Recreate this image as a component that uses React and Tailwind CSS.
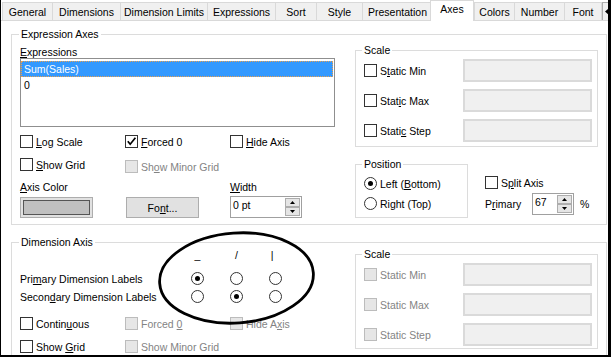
import React from 'react';

function Box({ checked, disabled }) {
  return (
    <span
      className={
        disabled
          ? 'flex h-[13px] w-[13px] shrink-0 border border-[#bcbcbc] bg-[#e6e6e6]'
          : 'flex h-[13px] w-[13px] shrink-0 items-center justify-center border border-[#333333] bg-white'
      }
    >
      {checked && (
        <svg width="11" height="11" viewBox="0 0 11 11">
          <path d="M1.8 5.2 L4.2 8.2 L9.4 1.8" fill="none" stroke="#000" strokeWidth="1.7" />
        </svg>
      )}
    </span>
  );
}

function Radio({ on }) {
  return (
    <span className="flex h-[13px] w-[13px] shrink-0 items-center justify-center rounded-full border border-[#333333] bg-white">
      {on && <span className="h-[5px] w-[5px] rounded-full bg-black" />}
    </span>
  );
}

function Option({ children, checked, disabled, className = '' }) {
  return (
    <div className={`flex items-center gap-[3px] ${className}`}>
      <Box checked={checked} disabled={disabled} />
      <span className={disabled ? 'text-[#838383]' : ''}>{children}</span>
    </div>
  );
}

function Field() {
  return <div className="ml-auto h-[23px] w-[129px] border-2 border-[#dadada] bg-[#f0f0f0]" />;
}

function SpinBtn({ up }) {
  return (
    <div className="flex flex-1 items-center justify-center border border-[#adadad] bg-[#e5e5e5]">
      <svg width="5" height="3" viewBox="0 0 5 3">
        <path d={up ? 'M0 3 L2.5 0 L5 3 Z' : 'M0 0 L5 0 L2.5 3 Z'} fill="#000" />
      </svg>
    </div>
  );
}

function Spin({ value, className = '' }) {
  return (
    <div className={`flex h-[22px] border border-[#a0a0a0] bg-white ${className}`}>
      <span className="flex-1 pl-[2px] pt-[2px]">{value}</span>
      <div className="my-[1px] mr-[1px] flex w-[15px] flex-col">
        <SpinBtn up />
        <SpinBtn />
      </div>
    </div>
  );
}

function ScaleRows({ disabled }) {
  return (
    <div className="flex flex-col gap-[7px] pl-[2px] pt-[3px]">
      <div className="flex h-[23px] items-center">
        <Option disabled={disabled}>{disabled ? 'Static Min' : <>S<u>t</u>atic Min</>}</Option>
        <Field />
      </div>
      <div className="flex h-[23px] items-center">
        <Option disabled={disabled}>{disabled ? 'Static Max' : <>Stat<u>i</u>c Max</>}</Option>
        <Field />
      </div>
      <div className="flex h-[23px] items-center">
        <Option disabled={disabled}>{disabled ? 'Static Step' : <>Stati<u>c</u> Step</>}</Option>
        <Field />
      </div>
    </div>
  );
}

const tabs = [
  { label: 'General', cls: 'w-[50px]' },
  { label: 'Dimensions', cls: 'w-[68px]' },
  { label: 'Dimension Limits', cls: 'w-[87px]' },
  { label: 'Expressions', cls: 'w-[68px]' },
  { label: 'Sort', cls: 'w-[41px]' },
  { label: 'Style', cls: 'w-[46px]' },
  { label: 'Presentation', cls: 'w-[70px]' },
  { label: 'Axes', active: true },
  { label: 'Colors', cls: 'w-[40px]' },
  { label: 'Number', cls: 'w-[50px]' },
  { label: 'Font', cls: 'w-[38px] border-r' },
];

export default function App() {
  return (
    <div className="relative h-[359px] w-[612px] overflow-hidden bg-white font-['Liberation_Sans',Arial,sans-serif] text-[10.5px] leading-[12px] text-black">
      <div className="h-[357px] w-[611px] overflow-hidden border-b-2 border-l border-r-[3px] border-black">
        {/* tab strip */}
        <div className="flex h-[20px] items-end pl-[1px]">
          {tabs.map((t) =>
            t.active ? (
              <div
                key={t.label}
                className="relative z-10 -mb-px -ml-[2px] h-[21px] w-[44px] border-x border-t border-[#d9d9d9] bg-white pt-[2px] text-center"
              >
                {t.label}
              </div>
            ) : (
              <div
                key={t.label}
                className={`h-[18px] border-l border-t border-[#d9d9d9] bg-[#f0f0f0] pt-[3px] text-center ${t.cls}`}
              >
                {t.label}
              </div>
            )
          )}
          <div className="relative h-[18px] w-[6px] border-l border-t border-[#adadad] bg-[#f0f0f0]">
            <svg className="absolute left-[2px] top-[5px]" width="4" height="7" viewBox="0 0 4 7">
              <path d="M0 3.5 L4 0 L4 7 Z" fill="#000" />
            </svg>
          </div>
        </div>

        {/* tab panel */}
        <div className="h-full border-t border-[#d9d9d9]">
          {/* Expression Axes */}
          <fieldset className="ml-[10px] mr-[1px] mt-[7px] border border-[#dcdcdc] pb-[6px] pl-[7px]">
            <legend className="px-[2px]">Expression Axes</legend>
            <div className="flex pl-[1px]">
              <div className="w-[335px]">
                <div className="mt-[6px]">
                  <u>E</u>xpressions
                </div>
                <div className="h-[69px] w-[315px] border border-[#8f8f8f] bg-white pt-[2px]">
                  <div className="mr-px flex h-[16px] items-center border border-dotted border-[#e8a050] bg-[#3399ff] pl-[2px] text-white">
                    Sum(Sales)
                  </div>
                  <div className="flex h-[16px] items-center pl-[3px]">0</div>
                </div>
                <div className="mt-[8px] flex">
                  <Option className="w-[105px]">
                    <u>L</u>og Scale
                  </Option>
                  <Option className="w-[105px]" checked>
                    <u>F</u>orced 0
                  </Option>
                  <Option className="w-[105px]">
                    <u>H</u>ide Axis
                  </Option>
                </div>
                <div className="mt-[10px] flex items-start">
                  <Option className="w-[105px]">
                    <u>S</u>how Grid
                  </Option>
                  <Option className="mt-[2px] w-[105px]" disabled>
                    Sh<u>o</u>w Minor Grid
                  </Option>
                </div>
                <div className="mt-[8px] flex">
                  <div className="w-[210px]">
                    <u>A</u>xis Color
                  </div>
                  <div>
                    <u>W</u>idth
                  </div>
                </div>
                <div className="mt-[3px] flex items-start">
                  <div className="mt-px flex h-[21px] w-[73px] border border-[#adadad] bg-[#e1e1e1] p-[2px]">
                    <div className="flex-1 border border-[#555555] bg-[#c0c0c0]" />
                  </div>
                  <div className="ml-[33px] mt-px flex h-[21px] w-[73px] items-center justify-center border border-[#adadad] bg-[#e1e1e1]">
                    <span>
                      Fo<u>n</u>t...
                    </span>
                  </div>
                  <Spin value="0 pt" className="ml-[31px] w-[72px]" />
                </div>
              </div>

              <div className="w-[243px]">
                <fieldset className="mt-[4px] border border-[#dcdcdc] pb-[4px] pl-[6px] pr-[5px]">
                  <legend className="px-[2px]">Scale</legend>
                  <ScaleRows />
                </fieldset>
                <div className="mt-[11px] flex items-start">
                  <fieldset className="w-[113px] border border-[#dcdcdc] pb-[7px] pl-[6px]">
                    <legend className="px-[2px]">Position</legend>
                    <div className="flex flex-col gap-[7px] pl-[2px] pt-[7px]">
                      <div className="flex items-center gap-[3px]">
                        <Radio on />
                        <span>
                          Left (<u>B</u>ottom)
                        </span>
                      </div>
                      <div className="flex items-center gap-[3px]">
                        <Radio />
                        <span>Right (Top)</span>
                      </div>
                    </div>
                  </fieldset>
                  <div className="ml-[17px] mt-[18px]">
                    <Option>
                      S<u>p</u>lit Axis
                    </Option>
                    <div className="mt-[4px] flex items-center">
                      <span className="w-[47px]">
                        P<u>r</u>imary
                      </span>
                      <Spin value="67" className="w-[42px]" />
                      <span className="ml-[6px]">%</span>
                    </div>
                  </div>
                </div>
              </div>
            </div>
          </fieldset>

          {/* Dimension Axis */}
          <fieldset className="ml-[10px] mr-[1px] mt-[11px] border border-[#dcdcdc] pb-[6px] pl-[7px]">
            <legend className="px-[2px]">Dimension Axis</legend>
            <div className="flex pl-[1px]">
              <div className="w-[335px]">
                <div className="mt-px grid grid-cols-[158px_39px_39px_39px] text-center">
                  <span />
                  <span>_</span>
                  <span>/</span>
                  <span className="pr-[7px]">|</span>
                </div>
                <div className="mt-[11px] grid h-[13px] grid-cols-[158px_39px_39px_39px] items-center justify-items-center">
                  <span className="justify-self-start">
                    Pri<u>m</u>ary Dimension Labels
                  </span>
                  <Radio on />
                  <Radio />
                  <Radio />
                </div>
                <div className="mt-[5px] grid h-[13px] grid-cols-[158px_39px_39px_39px] items-center justify-items-center">
                  <span className="justify-self-start">
                    Secon<u>d</u>ary Dimension Labels
                  </span>
                  <Radio />
                  <Radio on />
                  <Radio />
                </div>
                <div className="mt-[14px] flex">
                  <Option className="w-[105px]">
                    Contin<u>u</u>ous
                  </Option>
                  <Option className="w-[105px]" disabled>
                    Forced <u>0</u>
                  </Option>
                  <Option className="w-[105px]" disabled>
                    Hide A<u>x</u>is
                  </Option>
                </div>
                <div className="mt-[10px] flex">
                  <Option className="w-[105px]">
                    Show <u>G</u>rid
                  </Option>
                  <Option className="w-[105px]" disabled>
                    Show Minor Grid
                  </Option>
                </div>
              </div>
              <div className="w-[243px]">
                <fieldset className="border border-[#dcdcdc] pb-[2px] pl-[6px] pr-[5px]">
                  <legend className="px-[2px]">Scale</legend>
                  <ScaleRows disabled />
                </fieldset>
              </div>
            </div>
          </fieldset>
        </div>
      </div>

      {/* hand-drawn highlight over the label orientation radios */}
      <svg className="absolute left-[150px] top-[226px]" width="175" height="106" viewBox="0 0 175 106">
        <ellipse
          cx="86.5"
          cy="52"
          rx="77"
          ry="45"
          transform="rotate(-4 86.5 52)"
          fill="none"
          stroke="#000"
          strokeWidth="2.8"
        />
      </svg>
    </div>
  );
}
